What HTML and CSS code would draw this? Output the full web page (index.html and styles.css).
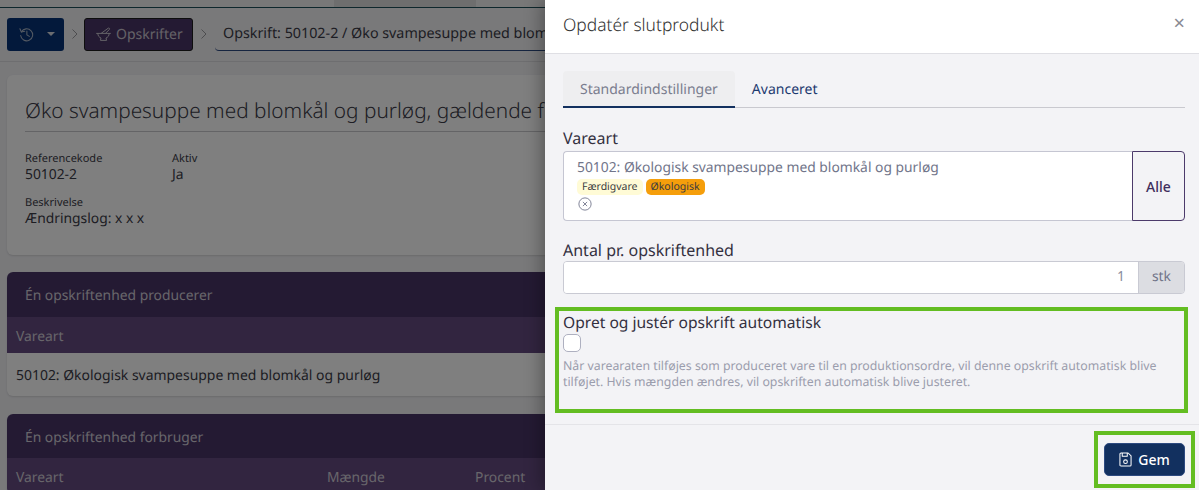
FILE: index.html
```html
<!DOCTYPE html>
<html lang="da">

<head>
    <meta charset="UTF-8">
    <meta name="viewport" content="width=device-width, initial-scale=1.0">
    <title>Opdatér slutprodukt</title>
    <link rel="stylesheet" href="styles.css">
</head>

<body>
    <div class="page">
        <div class="top-strip">
            <div class="top-tab"></div>
        </div>

        <nav class="crumbs">
            <div class="history-btn">
                <svg class="history-icon" viewBox="0 0 16 16" fill="none" stroke="currentColor" stroke-width="1.1" stroke-linecap="round" stroke-linejoin="round">
                    <path d="M2.6 5.2A6.4 6.4 0 1 1 1.8 9" />
                    <path d="M1 1.8l1.5 3.6 3.6-.9" />
                    <path d="M8.4 4.4v4l2.6 1.6" />
                </svg>
                <span class="caret"></span>
            </div>
            <svg class="chevron" viewBox="0 0 8 12" fill="none" stroke="currentColor" stroke-width="1"><path d="M1.5 1.5L6 6l-4.5 4.5" /></svg>
            <div class="recipes-btn">
                <svg class="mortar-icon" viewBox="0 0 15 14" fill="none" stroke="currentColor" stroke-width="1" stroke-linecap="round" stroke-linejoin="round">
                    <path d="M0.6 6.4h13.8" />
                    <path d="M1.8 6.4c0 2.6 1.5 4 3.2 4.6l-.6 2.4h6.2l-.6-2.4c1.7-.6 3.2-2 3.2-4.6" />
                    <path d="M5.4 6.2l6.8-5c.9-.6 1.9.5 1.2 1.3L9.6 6.2" />
                </svg>
                <span>Opskrifter</span>
            </div>
            <svg class="chevron" viewBox="0 0 8 12" fill="none" stroke="currentColor" stroke-width="1"><path d="M1.5 1.5L6 6l-4.5 4.5" /></svg>
            <div class="crumb-current">Opskrift: 50102-2 / Øko svampesuppe med blom</div>
        </nav>

        <section class="card info-card">
            <h1 class="info-title">Øko svampesuppe med blomkål og purløg, gældende fra 01-01-2023</h1>
            <div class="info-row">
                <div class="info-field info-field-ref">
                    <div class="info-label">Referencekode</div>
                    <div class="info-value">50102-2</div>
                </div>
                <div class="info-field">
                    <div class="info-label">Aktiv</div>
                    <div class="info-value">Ja</div>
                </div>
            </div>
            <div class="info-field">
                <div class="info-label">Beskrivelse</div>
                <div class="info-value">Ændringslog: x x x</div>
            </div>
        </section>

        <section class="card table-card">
            <div class="table-title">Én opskriftenhed producerer</div>
            <div class="table-head">Vareart</div>
            <div class="table-cell">50102: Økologisk svampesuppe med blomkål og purløg</div>
        </section>

        <section class="card table-card">
            <div class="table-title table-title-short">Én opskriftenhed forbruger</div>
            <div class="table-head table-head-cols">
                <span>Vareart</span>
                <span>Mængde</span>
                <span>Procent</span>
            </div>
        </section>
    </div>

    <div class="backdrop"></div>

    <aside class="modal">
        <header class="modal-header">
            <h2 class="modal-title">Opdatér slutprodukt</h2>
            <span class="modal-close">×</span>
        </header>

        <div class="modal-body">
            <div class="tabs">
                <div class="tab tab-active">Standardindstillinger</div>
                <div class="tab">Avanceret</div>
            </div>

            <label class="field-label">Vareart</label>
            <div class="select-group">
                <div class="select-box">
                    <div class="select-text">50102: Økologisk svampesuppe med blomkål og purløg</div>
                    <div class="badges">
                        <span class="badge badge-yellow">Færdigvare</span>
                        <span class="badge badge-orange">Økologisk</span>
                    </div>
                    <svg class="clear-icon" viewBox="0 0 16 16" fill="none" stroke="currentColor" stroke-width="1">
                        <circle cx="8" cy="8" r="7" />
                        <path d="M5.6 5.6l4.8 4.8M10.4 5.6l-4.8 4.8" />
                    </svg>
                </div>
                <button class="select-btn">Alle</button>
            </div>

            <label class="field-label field-label-amount">Antal pr. opskriftenhed</label>
            <div class="amount-group">
                <div class="amount-input">1</div>
                <div class="amount-unit">stk</div>
            </div>

            <div class="highlight auto-box">
                <label class="field-label">Opret og justér opskrift automatisk</label>
                <div class="checkbox"></div>
                <p class="hint">Når varearaten tilføjes som produceret vare til en produktionsordre, vil denne opskrift automatisk blive tilføjet. Hvis mængden ændres, vil opskriften automatisk blive justeret.</p>
            </div>
        </div>

        <footer class="modal-footer">
            <div class="highlight save-box">
                <button class="save-btn">
                    <svg class="save-icon" viewBox="0 0 14 16" fill="none" stroke="currentColor" stroke-width="1.1" stroke-linejoin="round">
                        <path d="M1 2.2c0-.7.5-1.2 1.2-1.2h7.6L13 4v9.8c0 .7-.5 1.2-1.2 1.2H2.2c-.7 0-1.2-.5-1.2-1.2z" />
                        <path d="M3.5 1v3.6h5.4V1" />
                        <circle cx="7" cy="10.4" r="2" />
                    </svg>
                    <span>Gem</span>
                </button>
            </div>
        </footer>
    </aside>
</body>

</html>
```

FILE: styles.css
```css
* {
    box-sizing: border-box;
}

html,
body {
    height: 490px;
    margin: 0;
    overflow: hidden;
}

body {
    font-family: "Noto Sans", sans-serif;
    font-size: 13.85px;
    color: #3b3b47;
    background: #f2f2f5;
    text-rendering: geometricPrecision;
}

/* page behind the modal */
.page {
    width: 1199px;
    height: 490px;
    overflow: hidden;
}

.top-strip {
    height: 8px;
    background: #f0f0f0;
    border-bottom: 1px solid #1c4f58;
}

.top-tab {
    width: 142px;
    height: 7px;
    margin-left: 334px;
    background: #dcdcdc;
}

.crumbs {
    display: flex;
    align-items: center;
    height: 54px;
    padding: 0 7px 1px;
    border-bottom: 1px solid #dcdce0;
}

.history-btn {
    display: flex;
    align-items: center;
    flex: none;
    width: 57px;
    height: 33px;
    padding-left: 12px;
    color: #a9b4c6;
    background: #063376;
    border-radius: 3px;
}

.history-icon {
    width: 15px;
    height: 15px;
}

.caret {
    width: 0;
    height: 0;
    margin-left: 13px;
    border-left: 4px solid transparent;
    border-right: 4px solid transparent;
    border-top: 4px solid #d5d9e0;
}

.chevron {
    flex: none;
    width: 8px;
    height: 12px;
    margin: 0 5px 0 7px;
    color: #9a9a9f;
}

.recipes-btn {
    display: flex;
    align-items: center;
    flex: none;
    gap: 5px;
    width: 109px;
    height: 33px;
    padding-left: 11px;
    font-size: 14px;
    color: #c8c4ce;
    background: #483466;
    border: 1px solid #1c1c1c;
    border-radius: 3px;
}

.mortar-icon {
    width: 15px;
    height: 14px;
}

.crumb-current {
    flex: none;
    width: 330px;
    height: 33px;
    margin-left: 2px;
    padding: 6px 0 0 8px;
    font-size: 14.3px;
    white-space: nowrap;
    border-bottom: 1px solid #2d4a80;
    border-radius: 0 0 0 4px;
}

.card {
    margin: 13px 7px 0;
    background: #fff;
    border-radius: 6px;
    box-shadow: 0 1px 2px rgba(0, 0, 0, 0.12);
}

.info-card {
    height: 180px;
    padding: 22px 18px 0;
}

.info-title {
    margin: 0 0 20px;
    padding-bottom: 6px;
    font-size: 20.8px;
    font-weight: 300;
    line-height: 28px;
    white-space: nowrap;
    overflow: hidden;
    border-bottom: 1px solid #c8c8cc;
}

.info-row {
    display: flex;
    margin-bottom: 12px;
}

.info-field-ref {
    width: 147px;
}

.info-label {
    font-size: 11px;
    line-height: 14px;
}

.info-value {
    margin-top: -1px;
    line-height: 19px;
}

.table-card {
    margin-top: 17px;
    overflow: hidden;
}

.table-title {
    height: 45px;
    padding: 14px 18px 0;
    color: #d0ccd6;
    background: #483466;
}

.table-title-short {
    height: 44px;
}

.table-head {
    height: 36px;
    padding: 10px 9px 0;
    color: #d0ccd6;
    background: #644a80;
}

.table-head-cols {
    display: flex;
}

.table-head-cols span:first-child {
    width: 311px;
}

.table-head-cols span:nth-child(2) {
    width: 148px;
}

.table-cell {
    height: 43px;
    padding: 13px 9px 0;
    font-size: 13.95px;
}

.table-card + .table-card {
    margin-top: 18px;
}

/* dark layer over the page */
.backdrop {
    position: absolute;
    inset: 0;
    background: rgba(0, 0, 0, 0.5);
}

.modal {
    position: absolute;
    top: 0;
    right: 0;
    display: flex;
    flex-direction: column;
    width: 654px;
    height: 490px;
    background: #f3f3f6;
    box-shadow: -4px 0 16px rgba(0, 0, 0, 0.3);
}

.modal-header {
    display: flex;
    align-items: center;
    justify-content: space-between;
    height: 54px;
    padding: 0 14px 4px 18px;
    background: #fff;
    border-bottom: 1px solid #dfdfe4;
}

.modal-title {
    margin: 0;
    font-size: 17.4px;
    font-weight: 300;
    color: #333;
}

.modal-close {
    font-size: 20px;
    line-height: 16px;
    margin-bottom: 4px;
    color: #8a8a92;
}

.modal-body {
    flex: none;
    height: 371px;
    padding: 17px 14px 0 18px;
    border-bottom: 1px solid #e4e4e8;
}

.tabs {
    display: flex;
    height: 37px;
    margin-bottom: 19px;
    border-bottom: 1px solid #c9c9cf;
}

.tab {
    height: 37px;
    padding: 9px 17px 0;
    font-size: 14px;
    color: #1d3a70;
}

.tab-active {
    color: #7a7d8e;
    background: #eeeef0;
    border-bottom: 2px solid #12305f;
    border-radius: 4px 4px 0 0;
}

.field-label {
    display: block;
    font-size: 16px;
    line-height: 22px;
    color: #33303f;
}

.select-group {
    display: flex;
    height: 70px;
    margin-top: 2px;
}

.select-box {
    flex: 1;
    padding: 6px 13px 0;
    background: #fff;
    border: 1px solid #c5c6d2;
    border-right: 0;
    border-radius: 4px 0 0 4px;
}

.select-text {
    line-height: 20px;
    color: #71758a;
}

.badges {
    display: flex;
    gap: 3px;
    margin-top: 1px;
}

.badge {
    padding: 0 5px;
    font-size: 10.5px;
    line-height: 16px;
    border-radius: 5px;
    color: #3b3b40;
}

.badge-yellow {
    background: #fffbd6;
}

.badge-orange {
    background: #f59e0b;
}

.clear-icon {
    display: block;
    width: 14px;
    height: 14px;
    margin: 2px 0 0 1px;
    color: #71758a;
}

.select-btn {
    width: 53px;
    padding: 0;
    font: 500 14px "Noto Sans", sans-serif;
    color: #3f2f5c;
    background: #f3f3f6;
    border: 1px solid #4c3a6b;
    border-radius: 0 4px 4px 0;
}

.field-label-amount {
    margin-top: 18px;
}

.amount-group {
    display: flex;
    height: 33px;
    border: 1px solid #c9cad3;
    border-radius: 4px;
    overflow: hidden;
}

.amount-input {
    flex: 1;
    padding: 5px 13px 0;
    text-align: right;
    color: #8b8e9e;
    background: #fff;
}

.amount-unit {
    width: 46px;
    padding-top: 5px;
    text-align: center;
    color: #71758a;
    background: #dcdde2;
    border-left: 1px solid #c9cad3;
}

.highlight {
    border: 4px solid #63bd22;
}

.auto-box {
    height: 106px;
    margin: 13px -3px 0 -8px;
    padding: 0 4px;
}

.auto-box .field-label {
    font-size: 15.6px;
}

.checkbox {
    width: 18px;
    height: 18px;
    margin-top: 1px;
    background: #fff;
    border: 1px solid #aeb0c0;
    border-radius: 5px;
}

.hint {
    margin: 6px 0 0;
    font-size: 12.3px;
    line-height: 16px;
    color: #9b9dad;
}

.modal-footer {
    display: flex;
    justify-content: flex-end;
    padding: 6px 4px 0 0;
}

.save-box {
    width: 101px;
    height: 57px;
    padding: 8px 6px 0;
}

.save-btn {
    display: flex;
    align-items: center;
    justify-content: center;
    gap: 6px;
    width: 81px;
    height: 33px;
    padding: 0;
    font: 500 14px "Noto Sans", sans-serif;
    color: #fff;
    background: #12305f;
    border: 1px solid #2d4a80;
    border-radius: 5px;
}

.save-icon {
    width: 13px;
    height: 15px;
}
```
